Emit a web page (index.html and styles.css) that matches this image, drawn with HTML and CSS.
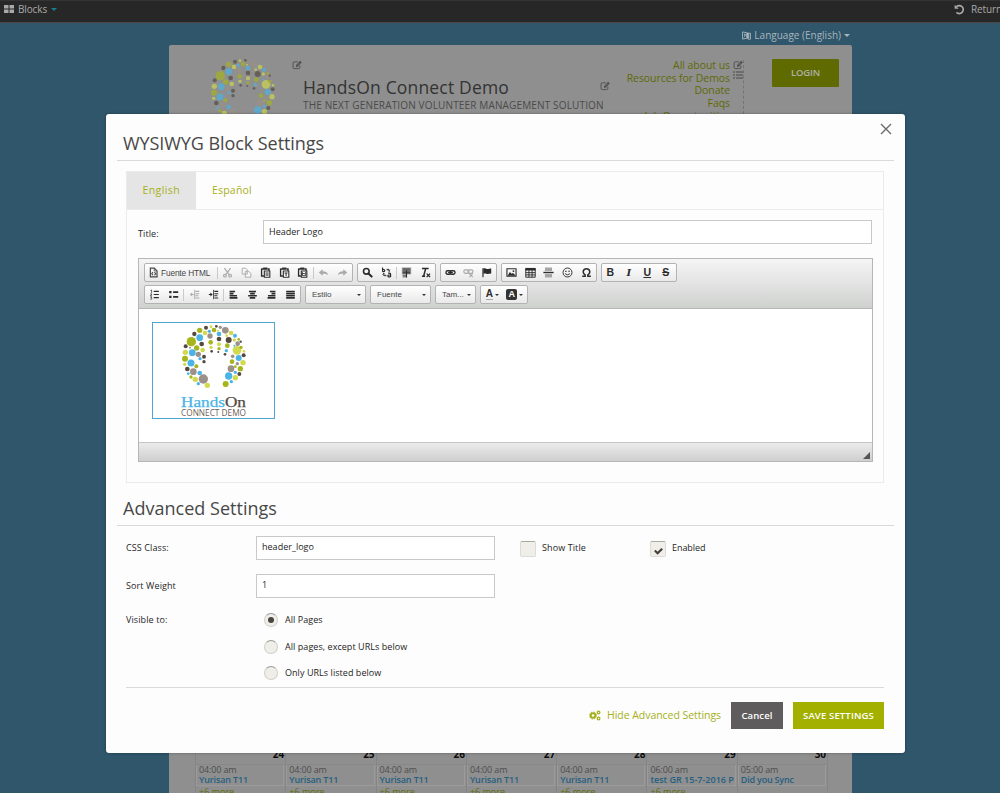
FILE: index.html
```
<!DOCTYPE html>
<html lang="en">
<head>
<meta charset="utf-8">
<title>WYSIWYG Block Settings</title>
<link rel="stylesheet" href="styles.css">
</head>
<body>
<svg class="sprite" aria-hidden="true">
  <symbol id="hand" viewBox="132 40 192 192">
    <g class="c-dark"><circle cx="204" cy="51" r="6"/><circle cx="235" cy="47" r="4"/><circle cx="169" cy="70" r="6.5"/><circle cx="191" cy="100" r="7"/><circle cx="143" cy="107" r="6"/><circle cx="198" cy="138" r="6"/><circle cx="198" cy="153" r="5"/><circle cx="148" cy="175" r="7"/><circle cx="221" cy="122" r="4"/><circle cx="243" cy="85" r="7"/><circle cx="241" cy="124" r="3"/><circle cx="272" cy="88" r="9"/><circle cx="261" cy="131" r="4"/><circle cx="308" cy="93" r="3.5"/><circle cx="317" cy="134" r="6"/><circle cx="304" cy="190" r="6"/></g>
    <g class="c-yellow"><circle cx="219" cy="48" r="4"/><circle cx="201" cy="67" r="7"/><circle cx="142" cy="125" r="8"/><circle cx="194" cy="118" r="7"/><circle cx="140" cy="161" r="5"/><circle cx="172" cy="206" r="8"/><circle cx="208" cy="224" r="8"/><circle cx="219" cy="110" r="5"/><circle cx="243" cy="101" r="6"/><circle cx="266" cy="75" r="4"/><circle cx="279" cy="67" r="7"/><circle cx="289" cy="88" r="5"/><circle cx="297" cy="119" r="13"/><circle cx="315" cy="156" r="8"/><circle cx="318" cy="122" r="4"/><circle cx="292" cy="201" r="8"/><circle cx="240" cy="60" r="3"/></g>
    <g class="c-green"><circle cx="228" cy="58" r="7"/><circle cx="185" cy="59" r="8"/><circle cx="160" cy="93" r="14"/><circle cx="176" cy="112" r="8"/><circle cx="141" cy="144" r="9"/><circle cx="175" cy="167" r="6"/><circle cx="159" cy="199" r="5"/><circle cx="218" cy="95" r="7"/><circle cx="243" cy="114" r="5"/><circle cx="268" cy="105" r="7"/><circle cx="302" cy="86" r="4"/><circle cx="309" cy="110" r="5"/><circle cx="282" cy="153" r="7"/><circle cx="307" cy="174" r="8"/><circle cx="292" cy="168" r="4"/><circle cx="263" cy="220" r="9"/></g>
    <g class="c-blue"><circle cx="214" cy="62" r="5"/><circle cx="185" cy="81" r="10"/><circle cx="163" cy="126" r="10"/><circle cx="186" cy="144" r="5"/><circle cx="159" cy="157" r="10.5"/><circle cx="151" cy="189" r="4"/><circle cx="185" cy="187" r="7"/><circle cx="181" cy="219" r="5"/><circle cx="243" cy="70" r="7"/><circle cx="265" cy="120" r="5"/><circle cx="291" cy="75" r="6"/><circle cx="289" cy="105" r="3"/><circle cx="302" cy="142" r="9"/><circle cx="272" cy="196" r="11"/><circle cx="292" cy="185" r="5"/><circle cx="280" cy="213" r="5"/></g>
    <g class="c-grey"><circle cx="247" cy="50" r="5"/><circle cx="262" cy="59" r="10"/><circle cx="156" cy="111" r="3"/><circle cx="181" cy="131" r="8"/><circle cx="166" cy="183" r="10"/><circle cx="196" cy="205" r="14"/><circle cx="216" cy="76" r="8"/><circle cx="299" cy="99" r="7"/><circle cx="284" cy="137" r="5.5"/><circle cx="298" cy="159" r="5"/><circle cx="279" cy="174" r="10"/></g>
  </symbol>
  <symbol id="edit" viewBox="0 0 14 14"><path d="M8 2.500H3.200A1.700 1.700 0 0 0 1.500 4.200v6A1.700 1.700 0 0 0 3.200 12h6A1.700 1.700 0 0 0 11 10.200V8" fill="none" stroke="currentColor" stroke-width="1.200"/><path d="M5.600 9.400V7L11.400 1.200l2.200 2.300L7.900 9.400z" fill="currentColor"/><path d="M7 7.600l4-4" stroke="#9a9a9a" stroke-width=".8"/></symbol>
  <symbol id="source" viewBox="0 0 14 14"><path d="M3 1.500h5l3.500 3.500v7.500H3z" fill="none" stroke="currentColor" stroke-width="1.500"/><path d="M8 1.500V5h3.500" fill="none" stroke="currentColor"/><path d="M6.400 6.500L4.700 8.500l1.700 2M8.200 6.500l1.700 2-1.700 2" fill="none" stroke="currentColor" stroke-width="1.300"/></symbol>
  <symbol id="cut" viewBox="0 0 14 14"><g fill="none" stroke="currentColor" stroke-width="1.500"><path d="M3 1.500l6 8M11 1.500l-6 8"/><circle cx="3.700" cy="11" r="1.700"/><circle cx="10.300" cy="11" r="1.700"/></g></symbol>
  <symbol id="copy" viewBox="0 0 14 14"><path d="M1.500 1.500h4.500l2 2V9H1.500zM5.500 5.500h4.500l2.500 2.500v5h-7z" fill="#f6f6f6" stroke="currentColor" stroke-width="1.200"/></symbol>
  <symbol id="paste" viewBox="0 0 14 14"><path d="M2 2.500h2.500M9.500 2.500H11.500V5M2 2v9.500h3" fill="none" stroke="currentColor" stroke-width="1.700"/><path d="M4 .7h5.500v2.800H4z" fill="currentColor"/><path d="M5.500 5h7v8h-7z" fill="#fff" stroke="currentColor" stroke-width="1.400"/></symbol>
  <symbol id="undo" viewBox="0 0 14 14"><path d="M1 7l5-4v2.500c4 0 6.500 2 7 5C11.500 9 9.500 8.500 6 8.500V11z" fill="currentColor"/></symbol>
  <symbol id="find" viewBox="0 0 14 14"><circle cx="5.500" cy="5.500" r="3.600" fill="none" stroke="currentColor" stroke-width="2"/><path d="M8.200 8.200l4 4" stroke="currentColor" stroke-width="2.600" stroke-linecap="round"/></symbol>
  <symbol id="replace" viewBox="0 0 14 14"><g fill="none" stroke="currentColor" stroke-width="1.500"><path d="M2 .5V6M2 3.200h1.500a1.200 1.200 0 0 1 0 2.600H2M9 7.700h2q1.200 0 1.200 1.200v3.800M12.200 10.200H10a1.200 1.200 0 0 0 0 2.400h2.200"/><path d="M7 3h3.200v2.500M8.700 4.200l1.500 1.500 1.500-1.500M7 11H3.500V8M2 9.500L3.500 8 5 9.500" stroke-width="1.200"/></g></symbol>
  <symbol id="selectall" viewBox="0 0 14 14"><path d="M1 .5h12v9H1z" fill="#aaa"/><path d="M2 2.500h10M2 5h10M2 7.500h10M7 4v9.500" stroke="currentColor" stroke-width="1.400"/><path d="M2 10.500h5M2 12.500h5" stroke="currentColor"/></symbol>
  <symbol id="removefmt" viewBox="0 0 14 14"><path d="M2.500 1.800H11M7.200 2L4.700 11.500M2.500 11.700h4" stroke="currentColor" stroke-width="1.900"/><path d="M8.500 8.500l4.300 4.300M12.800 8.500l-4.300 4.300" stroke="currentColor" stroke-width="1.600"/></symbol>
  <symbol id="link" viewBox="0 0 14 14"><rect x="1.200" y="4.800" width="6.500" height="4.400" rx="2.200" fill="none" stroke="currentColor" stroke-width="1.700"/><rect x="6.300" y="4.800" width="6.500" height="4.400" rx="2.200" fill="none" stroke="currentColor" stroke-width="1.700"/><path d="M4 7h6" stroke="currentColor" stroke-width="1.500"/></symbol>
  <symbol id="unlink" viewBox="0 0 14 14"><rect x="1" y="3.600" width="6.500" height="4.400" rx="2.200" fill="none" stroke="currentColor" stroke-width="1.500"/><rect x="6.200" y="3.600" width="6.500" height="4.400" rx="2.200" fill="none" stroke="currentColor" stroke-width="1.500"/><path d="M8 8.500l4.500 4.500M12.500 8.500L8 13" stroke="currentColor" stroke-width="1.300"/></symbol>
  <symbol id="flag" viewBox="0 0 14 14"><path d="M2.500 1.500V13" stroke="currentColor" stroke-width="1.500"/><path d="M3 2c2-1.500 4 1 6 .4 1.200-.4 2.500-.7 4-.6v6.600c-2.500 0-4 1-6 .3-1.500-.5-3-.4-4 .3z" fill="currentColor"/></symbol>
  <symbol id="image" viewBox="0 0 14 14"><path d="M1.200 2.200h11.600v9.600H1.200z" fill="none" stroke="currentColor" stroke-width="1.400"/><path d="M2 11l3-4.500 2 2 2-1 3.500 3.500z" fill="currentColor"/><circle cx="9.500" cy="5.200" r="1.200" fill="currentColor"/></symbol>
  <symbol id="table" viewBox="0 0 14 14"><path d="M.5 1.200h13V4.500H.5z" fill="currentColor"/><path d="M1 2v11h12V2M1 7.200h12M1 10.100h12M5 4v9M9 4v9" fill="none" stroke="currentColor" stroke-width="1.200"/></symbol>
  <symbol id="hr" viewBox="0 0 14 14"><path d="M2.500 .5h9v4.500h-9zM2.500 9h9v4.500h-9z" fill="#a5a5a5"/><path d="M.5 7h13" stroke="currentColor" stroke-width="1.800"/></symbol>
  <symbol id="smiley" viewBox="0 0 14 14"><circle cx="7" cy="7" r="5.700" fill="none" stroke="currentColor" stroke-width="1.200"/><circle cx="5" cy="5.500" r="1" fill="currentColor"/><circle cx="9" cy="5.500" r="1" fill="currentColor"/><path d="M4 8.500q3 3 6 0" fill="none" stroke="currentColor" stroke-width="1.200"/></symbol>
  <symbol id="omega" viewBox="0 0 14 14"><path d="M1.500 11.800h3.800V10C1 7.300 2.800 2.200 7 2.200s6 5.100 1.700 7.800v1.800h3.800" fill="none" stroke="currentColor" stroke-width="1.900"/></symbol>
  <symbol id="ol" viewBox="0 0 14 14"><path d="M6 3h6.500M6 7h6.500M6 11h6.500" stroke="currentColor" stroke-width="1.500"/><path d="M2 2l1.300-.8V5M1.500 6.300h2.200L1.700 8.800h2.200M1.600 10.300h2l-.8 1 1 .5-.6 1.200H1.600" fill="none" stroke="currentColor" stroke-width=".9"/></symbol>
  <symbol id="ul" viewBox="0 0 14 14"><path d="M6.500 4H13M6.500 10H13" stroke="currentColor" stroke-width="2"/><path d="M1.500 2.500h3v3h-3zM1.500 8.500h3v3h-3z" fill="currentColor"/></symbol>
  <symbol id="indent" viewBox="0 0 14 14"><path d="M7 1v12" stroke="currentColor"/><path d="M8 3h5M8 6h5M8 8.500h4M8 11.500h5M1 7h3" stroke="currentColor" stroke-width="1.400"/><path d="M3 4.500L6 7 3 9.500z" fill="currentColor"/></symbol>
  <symbol id="outdent" viewBox="0 0 14 14"><path d="M7 1v12" stroke="currentColor"/><path d="M8 3h5M8 6h5M8 8.500h4M8 11.500h5M3 7h3" stroke="currentColor" stroke-width="1.400"/><path d="M4 4.500L1 7l3 2.500z" fill="currentColor"/></symbol>
  <symbol id="left" viewBox="0 0 14 14"><path d="M2 3.200h7M2 5.900h5M2 8.600h9.500M2 11.300h10" stroke="currentColor" stroke-width="2"/></symbol>
  <symbol id="center" viewBox="0 0 14 14"><path d="M2.500 3.200h9M4 5.900h6M1.500 8.600h11M3.500 11.300h7" stroke="currentColor" stroke-width="2"/></symbol>
  <symbol id="right" viewBox="0 0 14 14"><path d="M5 3.200h7M7 5.900h5M2.500 8.600H12M2 11.300h10" stroke="currentColor" stroke-width="2"/></symbol>
  <symbol id="justify" viewBox="0 0 14 14"><path d="M1.500 3.200h11M1.500 5.900h11M1.500 8.600h11M1.500 11.300h11" stroke="currentColor" stroke-width="2"/></symbol>
</svg>

<header class="topbar">
  <div class="topbar-item blocks"><svg class="grid-icon" viewBox="0 0 10 8"><path d="M0 0h4.500v3.500H0zM5.500 0H10v3.500H5.500zM0 4.500h4.500V8H0zM5.500 4.500H10V8H5.500z" fill="currentColor"/></svg><span>Blocks</span><i class="caret teal"></i></div>
  <div class="topbar-item return"><svg class="return-icon" viewBox="0 0 12 12"><path d="M2.600 3A4.400 4.400 0 1 1 2.600 9.200" fill="none" stroke="currentColor" stroke-width="1.800"/><path d="M.7.800v4.400h4.400z" fill="currentColor"/></svg><span>Return</span></div>
</header>

<div class="page">
  <div class="language"><svg class="lang-icon" viewBox="0 0 10 10"><path d="M.5 1l5 1v6l-5 1zM5.500 2.500h4v6.500h-3" fill="none" stroke="currentColor" stroke-width="1"/><path d="M2 4h2.500M3 3v3M1.800 7L4 4.800M5.500 2.500h2V8h-2z" stroke="currentColor" fill="currentColor" stroke-width=".8"/></svg><span>Language (English)</span><i class="caret"></i></div>
  <div class="sheet">
    <div class="masthead">
      <svg class="masthead-logo"><use href="#hand"/></svg>
      <div class="brand">
        <div class="brand-tools"><svg class="edit"><use href="#edit"/></svg></div>
        <div class="brand-name"><span>HandsOn Connect Demo</span><svg class="edit"><use href="#edit"/></svg></div>
        <div class="tagline">THE NEXT GENERATION VOLUNTEER MANAGEMENT SOLUTION</div>
      </div>
      <nav class="links"><a>All about us</a><a>Resources for Demos</a><a>Donate</a><a>Faqs</a><a>Job Opportunities</a></nav>
      <div class="link-tools"><svg class="edit"><use href="#edit"/></svg><svg class="list-icon" viewBox="0 0 10 8"><path d="M3 1h7M3 4h7M3 7h7M0 1h2M0 4h2M0 7h2" stroke="currentColor" stroke-width="1.200"/></svg></div>
      <button class="login">LOGIN</button>
    </div>
    <div class="calendar">
      <div class="day"><b class="num">24</b><div class="event"><span>04:00 am</span><b>Yurisan T11</b></div><a>+6 more</a></div>
      <div class="day"><b class="num">25</b><div class="event"><span>04:00 am</span><b>Yurisan T11</b></div><a>+6 more</a></div>
      <div class="day"><b class="num">26</b><div class="event"><span>04:00 am</span><b>Yurisan T11</b></div><a>+6 more</a></div>
      <div class="day"><b class="num">27</b><div class="event"><span>04:00 am</span><b>Yurisan T11</b></div><a>+6 more</a></div>
      <div class="day"><b class="num">28</b><div class="event"><span>04:00 am</span><b>Yurisan T11</b></div><a>+6 more</a></div>
      <div class="day"><b class="num">29</b><div class="event"><span>06:00 am</span><b class="long">test GR 15-7-2016 P</b></div><a>+6 more</a></div>
      <div class="day"><b class="num">30</b><div class="event"><span>05:00 am</span><b class="tight">Did you Sync</b></div></div>
    </div>
  </div>
</div>

<section class="modal">
  <svg class="close" viewBox="0 0 12 12"><path d="M1 1l10 10M11 1L1 11" stroke="currentColor" stroke-width="1.400"/></svg>
  <h1>WYSIWYG Block Settings</h1>
  <div class="panel">
    <div class="tabs"><a class="tab active">English</a><a class="tab">Español</a></div>
    <div class="title-row"><label>Title:</label><div class="input">Header Logo</div></div>
    <div class="editor">
      <div class="toolbar">
        <div class="tools">
          <div class="group g1"><span class="source"><svg><use href="#source"/></svg>Fuente HTML</span><i class="sep"></i><span class="btn off"><svg><use href="#cut"/></svg></span><span class="btn off"><svg><use href="#copy"/></svg></span><span class="btn"><svg viewBox="0 0 14 14"><use href="#paste"/><path d="M7 7.500h4M7 9h4M7 10.500h4" stroke="currentColor"/></svg></span><span class="btn"><svg viewBox="0 0 14 14"><use href="#paste"/><path d="M7 7.500h4M9 7.500v4" stroke="currentColor" stroke-width="1.300"/></svg></span><span class="btn"><svg viewBox="0 0 14 14"><use href="#paste"/><path d="M7 7v4h4M7 7l2 2 2-2v4" fill="none" stroke="currentColor" stroke-width="1.100"/></svg></span><i class="sep"></i><span class="btn off"><svg><use href="#undo"/></svg></span><span class="btn off flip"><svg><use href="#undo"/></svg></span></div>
          <div class="group g2"><span class="btn"><svg><use href="#find"/></svg></span><span class="btn"><svg><use href="#replace"/></svg></span><i class="sep"></i><span class="btn"><svg><use href="#selectall"/></svg></span><span class="btn"><svg><use href="#removefmt"/></svg></span></div>
          <div class="group g3"><span class="btn"><svg><use href="#link"/></svg></span><span class="btn off"><svg><use href="#unlink"/></svg></span><span class="btn"><svg><use href="#flag"/></svg></span></div>
          <div class="group g4"><span class="btn"><svg><use href="#image"/></svg></span><span class="btn"><svg><use href="#table"/></svg></span><span class="btn"><svg><use href="#hr"/></svg></span><span class="btn"><svg><use href="#smiley"/></svg></span><span class="btn"><svg><use href="#omega"/></svg></span></div>
          <div class="group g5"><span class="btn letter">B</span><span class="btn letter italic">I</span><span class="btn letter under">U</span><span class="btn letter strike">S</span></div>
        </div>
        <div class="tools">
          <div class="group h1g"><span class="btn"><svg><use href="#ol"/></svg></span><span class="btn"><svg><use href="#ul"/></svg></span><i class="sep"></i><span class="btn off"><svg><use href="#outdent"/></svg></span><span class="btn"><svg><use href="#indent"/></svg></span><i class="sep"></i><span class="btn"><svg><use href="#left"/></svg></span><span class="btn"><svg><use href="#center"/></svg></span><span class="btn"><svg><use href="#right"/></svg></span><span class="btn"><svg><use href="#justify"/></svg></span></div>
          <div class="group combo w60">Estilo<i class="caret"></i></div>
          <div class="group combo w61">Fuente<i class="caret"></i></div>
          <div class="group combo w41">Tam...<i class="caret"></i></div>
          <div class="group colors"><span class="color"><b class="fg">A</b><i class="caret"></i></span><span class="color"><b class="bg">A</b><i class="caret"></i></span></div>
        </div>
      </div>
      <div class="canvas">
        <div class="logo-frame">
          <svg class="logo"><use href="#hand"/></svg>
          <svg class="wordmark" viewBox="0 0 70 22"><text x="2" y="11" textLength="65" lengthAdjust="spacingAndGlyphs" class="serif"><tspan class="c-blue">Hands</tspan><tspan class="c-dark">On</tspan></text><text x="2" y="20" textLength="65" lengthAdjust="spacingAndGlyphs" class="sans">CONNECT DEMO</text></svg>
        </div>
      </div>
      <div class="statusbar"><i class="resize"></i></div>
    </div>
  </div>
  <h2>Advanced Settings</h2>
  <div class="settings">
    <div class="field"><label>CSS Class:</label><div class="input">header_logo</div><span class="check"></span><span class="check-label first">Show Title</span><span class="check"><svg viewBox="0 0 12 12"><path d="M2 6l3 3 5-5" fill="none" stroke="#443e3b" stroke-width="2.300"/></svg></span><span class="check-label">Enabled</span></div>
    <div class="field second"><label>Sort Weight</label><div class="input">1</div></div>
    <div class="visibility"><label>Visible to:</label><div class="radios"><div class="option"><span class="radio on"></span>All Pages</div><div class="option"><span class="radio"></span>All pages, except URLs below</div><div class="option"><span class="radio"></span>Only URLs listed below</div></div></div>
  </div>
  <footer class="actions">
    <a class="hide-link"><svg viewBox="0 0 12 11"><g fill="none" stroke="currentColor"><circle cx="4" cy="5.500" r="2.300" stroke-width="1.900"/><circle cx="4" cy="5.500" r="3.500" stroke-width="1" stroke-dasharray="1.400 1.350"/><circle cx="9.600" cy="2.500" r="1.300" stroke-width="1.300"/><circle cx="9.600" cy="8.500" r="1.300" stroke-width="1.300"/></g></svg>Hide Advanced Settings</a>
    <button class="cancel">Cancel</button>
    <button class="save">SAVE SETTINGS</button>
  </footer>
</section>
</body>
</html>
```
FILE: styles.css
```
* { box-sizing: border-box; }
body { margin: 0; width: 1000px; height: 793px; overflow: hidden; position: relative; background: #2f566b; color: #333; font: 9px/12px "Open Sans", sans-serif; }
svg { display: block; flex: none; }
button { border: 0; padding: 0; font-family: inherit; text-align: center; }
.sprite { position: absolute; width: 0; height: 0; }
.caret { flex: none; width: 0; height: 0; border: 3px solid transparent; border-top-color: currentColor; border-bottom-width: 0; }
.c-dark { fill: #54493f; }
.c-yellow { fill: #d1d94c; }
.c-green { fill: #a6b51c; }
.c-blue { fill: #4bb4e6; }
.c-grey { fill: #9c9189; }

.topbar { height: 23px; display: flex; justify-content: space-between; background: #272727; border-top: 1px solid #343434; border-bottom: 1px solid #4b4845; color: #a9a9a9; font-size: 10px; }
.topbar-item { display: flex; align-items: center; height: 16px; white-space: nowrap; }
.blocks { padding-left: 4px; gap: 4px; letter-spacing: -.13px; }
.grid-icon { width: 10px; height: 8px; }
.teal { color: #168090; }
.return { width: 46px; gap: 6px; letter-spacing: -.13px; }
.return-icon { width: 11px; height: 11px; }

.page { width: 683px; margin-left: 169px; }
.language { height: 22px; padding: 2px 2px 0 0; display: flex; align-items: center; justify-content: flex-end; gap: 3px; color: #a8b5bc; font-size: 10px; }
.lang-icon { width: 9px; height: 9px; }
.sheet { height: 748px; background: #8f8f8f; border-radius: 2px 2px 0 0; display: flex; flex-direction: column; justify-content: space-between; }
.masthead { height: 69px; overflow: hidden; display: flex; }
.masthead-logo { width: 64px; height: 64px; margin: 13px 0 0 42px; opacity: .68; }
.masthead .edit { width: 10px; height: 10px; color: #4a4a4a; }
.brand { width: 307px; margin-left: 28px; white-space: nowrap; }
.brand-tools { height: 32px; padding-top: 15px; margin-left: -11px; }
.brand-name { display: flex; align-items: center; justify-content: space-between; height: 20px; font-size: 17.500px; letter-spacing: .17px; color: #333; line-height: 20px; }
.brand-name .edit { margin-top: -3px; }
.tagline { font-size: 10px; letter-spacing: .15px; line-height: 17px; color: #4a4a4a; }
.links { width: 120px; padding-top: 14px; display: flex; flex-direction: column; align-items: flex-end; color: #5f6a08; font-size: 10.500px; line-height: 12.700px; letter-spacing: -.06px; white-space: nowrap; }
.link-tools { width: 14px; margin-top: 15px; padding-left: 3px; border-right: 1px dashed #6b777d; display: flex; flex-direction: column; gap: 1px; color: #4a4a4a; }
.list-icon { width: 10px; height: 8px; }
.login { margin: 14px 0 0 28px; width: 67px; height: 28px; background: #5f6a00; border-radius: 1px; color: #b0b0a8; font-size: 9.500px; font-weight: 600; letter-spacing: -.17px; padding-bottom: 1px; }

.calendar { width: 633px; height: 50px; margin-left: 26px; display: grid; grid-template-columns: repeat(7, 90.300px); overflow: hidden; border-left: 1px solid #858585; }
.day { border-right: 1px solid #858585; padding: 5px 1px 0 0; white-space: nowrap; }
.num { display: block; height: 17px; text-align: right; font-size: 10px; line-height: 12px; font-weight: 700; color: #0c0c0c; border-bottom: 1px solid #888; }
.event { height: 21px; margin-bottom: 1px; padding-left: 2px; border: 1px solid #9b9b9b; border-top: 0; display: flex; flex-direction: column; line-height: 9.700px; }
.event span { color: #4d4d4d; letter-spacing: -.15px; }
.event b { color: #265f80; font-weight: 600; letter-spacing: -.13px; }
.event .long { letter-spacing: 0; }
.event .tight { letter-spacing: -.2px; }
.day a { display: block; padding-left: 3px; color: #5f6a08; line-height: 10px; }

.modal { position: absolute; left: 106px; top: 114px; width: 799px; height: 639px; background: #fdfdfd; border-radius: 3px; padding: 14px 11px 0; box-shadow: 0 0 3px rgba(0, 0, 0, .35); }
.close { position: absolute; right: 13px; top: 9px; width: 12px; height: 12px; color: #6a6a6a; }
h1, h2 { margin: 0; padding-left: 6px; font-size: 18px; line-height: 30px; font-weight: 400; color: #484848; border-bottom: 1px solid #d9d9d9; }
h1 { height: 33px; letter-spacing: -.07px; }
h2 { height: 33px; margin-top: 10px; letter-spacing: .02px; }
.panel { width: 758px; height: 312px; margin: 10px 0 0 9px; border: 1px solid #ebebeb; }
.tabs { height: 38px; display: flex; border-bottom: 1px solid #ebebeb; color: #a5b01a; font-size: 10.500px; line-height: 37px; }
.tab { padding: 0 16px; letter-spacing: .2px; }
.tab.active { width: 69px; background: #e5e5e5; padding: 0 0 0 15.500px; letter-spacing: .4px; }
.title-row { height: 48px; padding: 10px 11px 0 11px; display: flex; }
label { color: #262626; letter-spacing: .1px; white-space: nowrap; }
.title-row label { width: 125px; padding-top: 8px; }
.input { height: 24px; border: 1px solid #c9c9c9; background: #fff; padding-left: 5px; line-height: 20px; color: #1c1c1c; letter-spacing: .02px; }
.title-row .input { flex: 1; line-height: 21px; }

.editor { width: 735px; height: 204px; margin-left: 11px; border: 1px solid #b6b6b6; background: #fff; display: flex; flex-direction: column; font-family: "Liberation Sans", sans-serif; }
.toolbar { height: 50px; padding: 4px 5px 0; background: linear-gradient(#f5f5f5, #cfd1cf); border-bottom: 1px solid #b6b6b6; display: flex; flex-direction: column; gap: 3px; }
.tools { display: flex; gap: 4px; height: 19px; }
.group { height: 19px; border: 1px solid #b3b3b3; border-radius: 2px; background: linear-gradient(#fff, #e9e9e9); display: flex; align-items: center; color: #2b2b2b; }
.g1 { width: 209px; }
.g2 { width: 79px; }
.g3 { width: 57px; }
.g4 { width: 96px; }
.g5 { width: 76px; }
.h1g { width: 157px; }
.btn { flex: 1 1 0; display: flex; justify-content: center; align-items: center; height: 17px; }
.btn svg, .source svg { width: 11px; height: 11px; }
.off { color: #aaa; }
.flip svg { transform: scaleX(-1); }
.sep { width: 1px; height: 12px; margin: 0 .5px; background: #cacaca; flex: none; }
.source { width: 71px; display: flex; align-items: center; gap: 2px; padding-left: 3px; font-size: 8.300px; letter-spacing: -.14px; color: #474747; white-space: nowrap; }
.letter { font-weight: 700; font-size: 10.500px; line-height: 17px; padding-right: 2px; }
.italic { font-family: "DejaVu Serif", serif; font-style: italic; font-size: 10px; }
.under { text-decoration: underline; }
.strike { text-decoration: line-through; }
.combo { justify-content: space-between; padding: 0 4px 0 6px; font-size: 8px; color: #474747; }
.combo .caret, .color .caret { border-width: 2px; border-bottom-width: 0; color: #333; }
.w60 { width: 61px; }
.w61 { width: 61px; }
.w41 { width: 41px; }
.colors { width: 48px; padding-right: 1px; }
.color { flex: 1; display: flex; align-items: center; justify-content: center; gap: 2px; }
.fg { font-size: 10px; line-height: 10px; border-bottom: 1px solid #aaa; }
.bg { width: 11px; height: 11px; border-radius: 2px; background: #333; color: #fff; font-size: 9px; line-height: 11px; text-align: center; }
.canvas { flex: 1; padding: 13px; }
.logo-frame { width: 123px; height: 97px; border: 1px solid #4ea5cf; display: flex; flex-direction: column; align-items: center; }
.logo { width: 64px; height: 64px; margin-top: 1px; }
.wordmark { width: 70px; height: 22px; margin-top: 8px; }
.serif { font: 14px "Liberation Serif", serif; }
.serif tspan { stroke-width: .25px; }
.serif .c-blue { stroke: #4bb4e6; }
.serif .c-dark { stroke: #54493f; }
.sans { font: 8.600px "Open Sans", sans-serif; fill: #6b6057; }
.statusbar { height: 19px; background: linear-gradient(#ebebeb, #cfcfcf); border-top: 1px solid #c4c4c4; display: flex; justify-content: flex-end; align-items: flex-end; padding: 0 2px 2px; }
.resize { width: 0; height: 0; border-left: 7px solid transparent; border-bottom: 7px solid #555; }

.settings { width: 758px; height: 162px; margin-left: 9px; padding: 10px 0 0; border-bottom: 1px solid #d9d9d9; }
.field { height: 24px; display: flex; }
.field.second { margin-top: 14px; }
.field label, .visibility label { width: 130px; padding-top: 6px; }
.field .input { width: 239px; }
.check { width: 16px; height: 16px; margin: 5px 0 0 25px; background: #efeee9; border: 1px solid #dcdbd6; border-top-color: #a9a9a5; border-radius: 2px; display: flex; align-items: center; justify-content: center; }
.check svg { width: 11px; height: 11px; margin-top: 2px; }
.check-label { padding: 6px 0 0 6px; letter-spacing: -.05px; color: #262626; white-space: nowrap; }
.check-label.first { width: 89px; letter-spacing: .1px; }
.visibility { display: flex; padding-top: 9px; }
.visibility label { padding-top: 7px; }
.radios { padding: 6px 0 0 8px; display: flex; flex-direction: column; gap: 12.600px; }
.option { display: flex; align-items: center; gap: 7px; height: 14px; color: #1c1c1c; letter-spacing: .05px; white-space: nowrap; }
.radio { width: 14px; height: 14px; border-radius: 50%; background: #efeee9; border: 1px solid #d0cfca; border-top-color: #9d9d99; display: flex; align-items: center; justify-content: center; }
.radio.on::after { content: ""; width: 6px; height: 6px; border-radius: 50%; background: #4a4340; }
.actions { width: 758px; margin: 14px 0 0 9px; height: 27px; display: flex; justify-content: flex-end; }
.hide-link { display: flex; align-items: center; gap: 6px; height: 26px; color: #a5b01a; font-size: 10.500px; letter-spacing: -.05px; white-space: nowrap; }
.hide-link svg { width: 12px; height: 11px; }
.cancel, .save { height: 27px; padding-bottom: 1px; color: #fff; font-size: 9.500px; font-weight: 600; }
.cancel { width: 52px; margin-left: 10px; background: #5e5c5d; letter-spacing: .1px; }
.save { width: 91px; margin-left: 10px; background: #a3b000; letter-spacing: .16px; }
```
